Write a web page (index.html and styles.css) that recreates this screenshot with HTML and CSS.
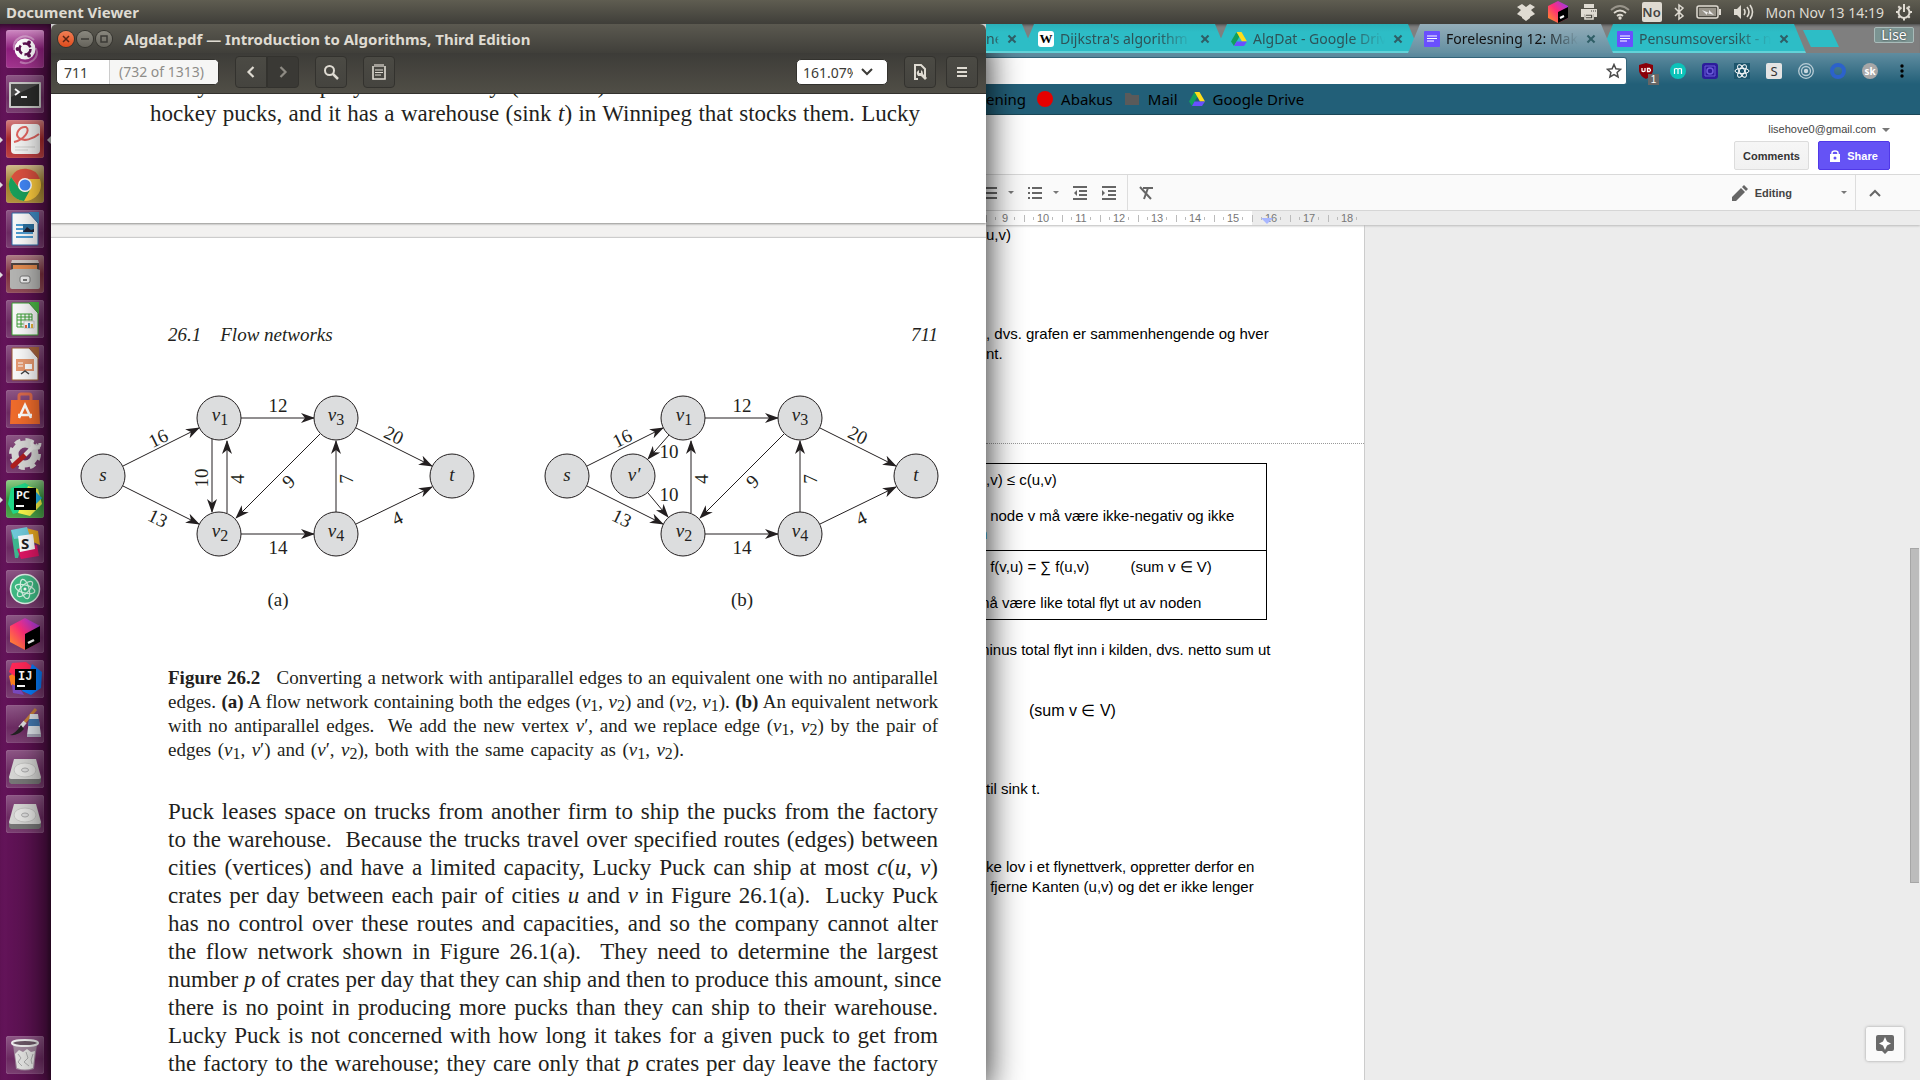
FILE: index.html
```html
<!DOCTYPE html>
<html lang="en">
<head>
<meta charset="utf-8">
<title>Document Viewer</title>
<link rel="stylesheet" href="styles.css">
</head>
<body>
<header class="panel">
  <span class="panel-app">Document Viewer</span>
  <div class="indicators">
    <svg class="ind" width="20" height="20" viewBox="0 0 20 20"><path fill="#dfdbd2" d="M6 2l4 3 4-3 5 3-4 3 4 4-5 3 0 1-4 3-4-3 0-1-5-3 4-4-4-3z"/></svg>
    <svg class="ind" width="22" height="22" viewBox="0 0 22 22"><defs><linearGradient id="jb" x1="0" y1="1" x2="1" y2="0"><stop offset="0" stop-color="#ff9a1f"/><stop offset=".5" stop-color="#ff2d78"/><stop offset="1" stop-color="#8a3cff"/></linearGradient></defs><path fill="url(#jb)" d="M11 0l10 5v12l-10 5-10-5V5z"/><path d="M11 11l10-5v11l-10 5z"/><path stroke="#fff" stroke-width="2" d="M13 17l4-2"/></svg>
    <svg class="ind" width="18" height="18" viewBox="0 0 18 18"><path fill="#dfdbd2" d="M4 1h10v4H4zM1 6h16v8h-3v-3H4v3H1z"/><path fill="none" stroke="#dfdbd2" stroke-width="1.6" d="M5 11h8v5H5zM6 13.500h5"/><path stroke="#45433e" d="M11 8h1m1 0h1m1 0h1"/></svg>
    <svg class="ind" width="22" height="18" viewBox="0 0 22 18"><g fill="none" stroke="#dfdbd2" stroke-width="1.800"><path stroke="#99958b" d="M2 7q9-8 18 0"/><path d="M5 10q6-5 12 0M8 13q3-2.500 6 0"/></g><circle cx="11" cy="15" r="1.700" fill="#dfdbd2"/></svg>
    <span class="lang">No</span>
    <svg class="ind" width="12" height="18" viewBox="0 0 12 18"><path fill="none" stroke="#dfdbd2" stroke-width="1.500" d="M2 5l8 8-4 3V2l4 3-8 8"/></svg>
    <svg class="ind" width="26" height="16" viewBox="0 0 26 16"><rect x="1" y="2" width="21" height="12" rx="2" fill="none" stroke="#dfdbd2" stroke-width="1.500"/><path fill="#dfdbd2" d="M23 5h2v6h-2z"/><path fill="#98948a" d="M3 4h17v8H3z"/><path fill="#eee" d="M6 6l7 3 0-3 5 5-7-2v2z"/></svg>
    <svg class="ind" width="22" height="18" viewBox="0 0 22 18"><path fill="#dfdbd2" d="M1 6h3l4-4v14l-4-4H1z"/><g fill="none" stroke="#dfdbd2" stroke-width="1.600"><path d="M11 6q2 3 0 6M14 4q4 5 0 10M17 2q5 7 0 14"/></g></svg>
    <time class="clock">Mon Nov 13 14:19</time>
    <svg class="ind" width="18" height="18" viewBox="0 0 18 18"><g fill="none" stroke="#dfdbd2"><path stroke-width="2" d="M6.500 4.500a5.500 5.500 0 1 0 5 0M9 1v8"/><path stroke-width="2" d="M1 9h2M15 9h2M3.300 14.700l1.500-1.500M14.700 14.700l-1.500-1.500M9 15v2.500M3.300 3.300l1.500 1.500M14.700 3.300l-1.500 1.500"/></g></svg>
  </div>
</header>

<div class="desktop">
  <nav class="launcher" aria-label="Launcher">
    <button class="tile tile-dash" aria-label="Dash"><svg viewBox="0 0 38 38"><g fill="none" stroke="#fff" stroke-opacity=".35" stroke-width="2"><path d="M8 20C6 8 20 2 28 10M30 18c4 10-6 18-16 14"/></g><circle cx="19" cy="19" r="10.500" fill="#fff"/><circle cx="19" cy="19" r="5.500" fill="none" stroke="#5c1150" stroke-width="2.500" stroke-dasharray="9 2.500"/><g fill="#5c1150"><circle cx="11.500" cy="19" r="1.900"/><circle cx="23" cy="12.500" r="1.900"/><circle cx="23" cy="25.500" r="1.900"/></g></svg></button>
    <button class="tile" aria-label="Terminal"><svg viewBox="0 0 38 38"><rect x="3" y="7" width="32" height="26" rx="1" fill="#c8c8c6"/><rect x="5" y="9" width="28" height="22" fill="#2b2c2b"/><path fill="#4b4b4a" d="M5 9h28L5 22z"/><path fill="none" stroke="#fff" stroke-width="1.800" d="M9 14l4 3-4 3M15 22h6"/></svg></button>
    <button class="tile tile-red running focused" aria-label="Document Viewer"><svg viewBox="0 0 38 38"><rect x="5" y="4" width="29" height="30" rx="4" fill="#f3f3f2"/><path fill="none" stroke="#e0645f" stroke-width="2" d="M8 22c10-2 17-12 12-15-6-1-12 7-7 11s14 1 20-4"/><path stroke="#cfcfcd" d="M9 27h20M9 30h13"/></svg></button>
    <button class="tile tile-gold running" aria-label="Chrome"><svg viewBox="0 0 38 38"><circle cx="19" cy="20" r="16" fill="#fbca3e"/><path fill="#d9503f" d="M5 12a16 16 0 0 1 29 2H19a7 7 0 0 0-6 9z"/><path fill="#1a9f5b" d="M5 12a16 16 0 0 0 13 24l6-11a7 7 0 0 1-11-2z"/><circle cx="19" cy="20" r="7" fill="#fff"/><circle cx="19" cy="20" r="5.500" fill="#4285f4"/></svg></button>
    <button class="tile" aria-label="Writer"><svg viewBox="0 0 38 38"><path fill="#fafafa" stroke="#2d6ca8" d="M6 3h17l9 10v22H6z"/><path fill="#3f8cc4" d="M23 2h10v12z"/><path stroke="#4d9bd0" stroke-width="2" d="M10 15h9M10 19h7M10 23h17M10 27h17"/><path fill="#2a6f9e" d="M17 14h11v8H17z"/><path fill="#223" d="M17 22l4-5 4 3 3-1v3z"/></svg></button>
    <button class="tile tile-brown running" aria-label="Files"><svg viewBox="0 0 38 38"><path fill="#cfc6c3" d="M6 5h26l1 3H5z"/><path fill="#4f4340" d="M5 8h28v8H5z"/><path fill="#e28b4f" d="M7 10h24v6H7z"/><path fill="#b4b4b2" d="M4 15l3-1h24l3 1v17q0 2-2 2H6q-2 0-2-2z"/><rect x="14" y="21" width="10" height="7" rx="2" fill="#eee" stroke="#777"/><path stroke="#777" stroke-width="2" d="M17 25h4"/></svg></button>
    <button class="tile" aria-label="Calc"><svg viewBox="0 0 38 38"><path fill="#fafafa" stroke="#3aa332" d="M6 3h17l9 10v22H6z"/><path fill="#4cb944" d="M23 2h10v12z"/><path fill="none" stroke="#3c9e36" d="M11 14h15v13H11zM11 17h15M11 20h15M11 24h15M15 14v13M19 14v13M23 14v13"/><path fill="#fff" stroke="#ccc" d="M18 21h10v7H18z"/><path stroke-width="2" stroke="#e0673a" d="M20 28v-3"/><path stroke-width="2" stroke="#3f8cc4" d="M23 28v-5"/><path stroke-width="2" stroke="#e6b63b" d="M26 28v-4"/></svg></button>
    <button class="tile" aria-label="Impress"><svg viewBox="0 0 38 38"><path fill="#fafafa" stroke="#9c5a33" d="M6 3h17l9 10v22H6z"/><path fill="#a8653b" d="M23 2h10v12z"/><path fill="#e79a70" d="M10 14h18v12H10z"/><path stroke="#fff" d="M12 18h5M12 21h5"/><path fill="#fff" d="M19 19h7v5h-7z"/><path fill="none" stroke="#444" stroke-width="1.500" d="M15 29l4-3 4 3"/></svg></button>
    <button class="tile" aria-label="Software"><svg viewBox="0 0 38 38"><path fill="none" stroke="#d9694a" stroke-width="3" d="M13 11V6q0-2 2-2h8q2 0 2 2v5"/><path fill="#f06c2c" d="M5 10h28l1 24H4z"/><path fill="none" stroke="#fff" stroke-width="2.500" d="M13 28l6-13 6 13M12 25h14"/></svg></button>
    <button class="tile" aria-label="Settings"><svg viewBox="0 0 38 38"><circle cx="19" cy="19" r="10" fill="none" stroke="#d8d8d6" stroke-width="7"/><circle cx="19" cy="19" r="14" fill="none" stroke="#d8d8d6" stroke-width="4" stroke-dasharray="6 5"/><path stroke="#b01f1f" stroke-width="5" stroke-linecap="round" d="M7 31l12-11"/><path stroke="#e8e8e6" stroke-width="4" d="M19 20l10-10"/><path fill="none" stroke="#e8e8e6" stroke-width="3" d="M27 5q-3 6 2 8 5 0 5-5"/></svg></button>
    <button class="tile tile-green running" aria-label="PyCharm"><svg viewBox="0 0 38 38"><path fill="#21d789" d="M5 8l14-5 10 6-5 20-17 5-5-10z"/><path fill="#fcf84a" d="M22 6l10 3 4 15-12 12-12-3z"/><path fill="#22b8ef" d="M29 11l7 7-6 6z"/><rect x="8" y="8" width="22" height="22" /><text x="10" y="19" class="ide">PC</text><path stroke="#fff" stroke-width="2" d="M10 26h8"/></svg></button>
    <button class="tile" aria-label="Slack"><svg viewBox="0 0 38 38"><path fill="#3eb991" d="M5 5h9l4 8-6 20H9z"/><path fill="#e9a820" d="M20 3l12 3 2 14-14-6z"/><path fill="#70cadb" d="M5 5l16-3 3 10-16 2z"/><path fill="#e01765" d="M15 34l18-3-2-11-20 4z"/><path fill="#fff" d="M12 11l15-2 2 15-15 3z"/><text x="15" y="24" class="ide ide-dark">S</text></svg></button>
    <button class="tile" aria-label="Atom"><svg viewBox="0 0 38 38"><circle cx="19" cy="19" r="14.500" fill="#3fba84" stroke="#e2efe8" stroke-width="1.500"/><g fill="none" stroke="#d9f5e6" stroke-width="1.200"><ellipse cx="19" cy="19" rx="10" ry="4" transform="rotate(15 19 19)"/><ellipse cx="19" cy="19" rx="10" ry="4" transform="rotate(75 19 19)"/><ellipse cx="19" cy="19" rx="10" ry="4" transform="rotate(135 19 19)"/></g><circle cx="19" cy="19" r="1.500" fill="#fff"/></svg></button>
    <button class="tile" aria-label="Toolbox"><svg viewBox="0 0 38 38"><path fill="url(#jb)" d="M19 3l15 8v16l-15 8-15-8V11z"/><path d="M19 19l15-8v16l-15 8z"/><path stroke="#fff" stroke-width="2.500" d="M22 28l6-3"/></svg></button>
    <button class="tile" aria-label="IDEA"><svg viewBox="0 0 38 38"><path fill="#fc801d" d="M3 16l10-6v18l-8-3z"/><path fill="#fe2857" d="M6 3l14-1 8 6-14 12L3 12z"/><path fill="#087cfa" d="M26 4l10 8-1 16-10 7-9-4 9-24z"/><path fill="#7a4ac0" d="M6 24l8 4 4 7-11-2z"/><rect x="9" y="9" width="21" height="21"/><text x="12" y="20" class="ide ide-mono">IJ</text><path stroke="#fff" stroke-width="2" d="M11 26h8"/></svg></button>
    <button class="tile" aria-label="Paint"><svg viewBox="0 0 38 38"><path stroke="#c8813b" stroke-width="3" d="M30 4L18 18"/><path stroke="#ddd" stroke-width="4" d="M19 17l-5 6"/><path fill="#222" d="M15 20l3 4q-6 7-14 6 6-2 11-10z"/><path fill="#dfe5ea" d="M24 9h8l3 21H21z"/><path fill="#4379b0" d="M23 14h10l1 7H22z"/><path fill="#aab" d="M21 29h14v3H21z"/></svg></button>
    <button class="tile" aria-label="Volume 1"><svg viewBox="0 0 38 38"><path fill="#777" d="M3 27h32v5l-2 2H5l-2-2z"/><path fill="#d6d6d4" d="M8 9h22l5 18q0 2-2 2H5q-2 0-2-2z"/><ellipse cx="19" cy="20" rx="11" ry="7" fill="#e6e6e4" stroke="#c5c5c3"/><ellipse cx="19" cy="20" rx="3.500" ry="2" fill="#ddd" stroke="#aaa"/></svg></button>
    <button class="tile" aria-label="Volume 2"><svg viewBox="0 0 38 38"><path fill="#777" d="M3 27h32v5l-2 2H5l-2-2z"/><path fill="#d6d6d4" d="M8 9h22l5 18q0 2-2 2H5q-2 0-2-2z"/><ellipse cx="19" cy="20" rx="11" ry="7" fill="#e6e6e4" stroke="#c5c5c3"/><ellipse cx="19" cy="20" rx="3.500" ry="2" fill="#ddd" stroke="#aaa"/></svg></button>
    <button class="tile tile-last" aria-label="Trash"><svg viewBox="0 0 38 38"><path fill="#bbb" fill-opacity=".6" d="M7 8h24l-3 25q-9 3-18 0z"/><path fill="#e4e4e2" d="M9 18l4-4 4 2 4-3 4 3 4-1-2 17q-8 3-16 0z"/><path fill="none" stroke="#aaa" d="M12 18l3 4-3 4 4 4M20 16l2 6-4 4 5 4M27 18l-2 6 1 4"/><ellipse cx="19" cy="7" rx="13" ry="3" fill="#6b5766" stroke="#eee" stroke-width="2"/></svg></button>
  </nav>

  <main class="viewer">
    <div class="titlebar">
      <button class="wm wm-close" aria-label="Close"><svg width="8" height="8" viewBox="0 0 8 8"><path stroke="#5a2413" stroke-width="1.500" d="M1 1l6 6M7 1L1 7"/></svg></button>
      <button class="wm" aria-label="Minimize"><svg width="8" height="8" viewBox="0 0 8 8"><path stroke="#3b3a36" stroke-width="1.500" d="M0 4h8"/></svg></button>
      <button class="wm" aria-label="Maximize"><svg width="8" height="8" viewBox="0 0 8 8"><path fill="none" stroke="#3b3a36" stroke-width="1.500" d="M1 1h6v6H1z"/></svg></button>
      <h1 class="title">Algdat.pdf — Introduction to Algorithms, Third Edition</h1>
    </div>
    <div class="toolbar">
      <div class="pager">
        <input id="page" class="page-no" value="711" aria-label="Page">
        <label for="page" class="page-of">(732 of 1313)</label>
      </div>
      <div class="pair">
        <button class="tb" aria-label="Previous page"><svg width="16" height="16" viewBox="0 0 16 16"><path fill="none" stroke="#dfdbd2" stroke-width="2.200" d="M10.500 3L5.500 8l5 5"/></svg></button><button class="tb tb-off" aria-label="Next page"><svg width="16" height="16" viewBox="0 0 16 16"><path fill="none" stroke="#8e8b84" stroke-width="2.200" d="M5.500 3l5 5-5 5"/></svg></button>
      </div>
      <button class="tb" aria-label="Find"><svg width="16" height="16" viewBox="0 0 16 16"><circle cx="6.500" cy="6.500" r="4.500" fill="none" stroke="#dfdbd2" stroke-width="2"/><path stroke="#dfdbd2" stroke-width="2.500" d="M10 10l5 5"/></svg></button>
      <button class="tb" aria-label="Annotate"><svg width="16" height="18" viewBox="0 0 16 18"><path fill="none" stroke="#dfdbd2" stroke-width="1.600" d="M2 3v13h12V3"/><path stroke="#dfdbd2" stroke-width="1.200" d="M4 1v3M6 1v3M8 1v3M10 1v3M12 1v3M4 7h8M4 9.500h8M4 12h6"/></svg></button>
      <div class="zoom">
        <input class="zoom-level" value="161.07%" aria-label="Zoom">
        <button class="zoom-open" aria-label="Zoom levels"><svg width="14" height="10" viewBox="0 0 14 10"><path fill="none" stroke="#3c3b37" stroke-width="2" d="M2 2l5 5 5-5"/></svg></button>
      </div>
      <button class="tb" aria-label="File options"><svg width="16" height="18" viewBox="0 0 16 18"><path fill="none" stroke="#dfdbd2" stroke-width="2" d="M6 16H3V2h6l4 4v8"/><path fill="#dfdbd2" d="M7 7q-4 2-1 6l3 0 4 4 2-2-4-4q0-3-2-4v3H7z"/></svg></button>
      <button class="tb" aria-label="Menu"><svg width="12" height="12" viewBox="0 0 12 12"><path stroke="#dfdbd2" stroke-width="2" d="M1 2h10M1 6h10M1 10h10"/></svg></button>
    </div>

    <div class="pages">
      <section class="sheet sheet-prev">
        <p class="body"><span class="ln">Lucky Puck Company has a factory (source <i>s</i>) in Vancouver that manufactures</span>
        <span class="ln">hockey pucks, and it has a warehouse (sink <i>t</i>) in Winnipeg that stocks them. Lucky</span></p>
      </section>
      <section class="sheet sheet-cur">
        <div class="runhead"><span>26.1 &nbsp;&nbsp; Flow networks</span><span>711</span></div>
        <svg class="figure" viewBox="51 380 935 240" role="img" aria-label="Flow networks (a) and (b)">
          <defs>
            <marker id="arrow" viewBox="0 0 14 10" refX="13" refY="5" markerWidth="14" markerHeight="10" markerUnits="userSpaceOnUse" orient="auto"><path fill="#231f20" d="M0 0l14 5-14 5 4-5z"/></marker>
            <g id="net">
              <g class="edges">
                <path d="M123 466l76-38"/><path d="M123 486l76 38"/><path d="M241 418h73"/><path d="M241 534h73"/>
                <path d="M227 513v-72"/><path d="M320 434l-84 84"/><path d="M336 512v-71"/><path d="M356 428l76 38"/><path d="M356 524l76-37"/>
              </g>
              <g class="nodes"><circle cx="103" cy="476" r="22"/><circle cx="219" cy="418" r="22"/><circle cx="336" cy="418" r="22"/><circle cx="219" cy="534" r="22"/><circle cx="336" cy="534" r="22"/><circle cx="452" cy="476" r="22"/></g>
              <g class="names">
                <text x="103" y="481">s</text><text x="452" y="481">t</text>
                <text x="220" y="421">v<tspan class="sub" dy="4">1</tspan></text><text x="336" y="421">v<tspan class="sub" dy="4">3</tspan></text>
                <text x="220" y="537">v<tspan class="sub" dy="4">2</tspan></text><text x="336" y="537">v<tspan class="sub" dy="4">4</tspan></text>
              </g>
              <g class="caps">
                <text transform="translate(161 444) rotate(-26)">16</text><text transform="translate(155 524) rotate(26)">13</text>
                <text x="278" y="412">12</text><text x="278" y="554">14</text>
                <text transform="translate(244 479) rotate(-90)">4</text><text transform="translate(293 486) rotate(-45)">9</text>
                <text transform="translate(353 479) rotate(-90)">7</text><text transform="translate(391 441) rotate(26)">20</text>
                <text transform="translate(400 524) rotate(-26)">4</text>
              </g>
            </g>
          </defs>
          <use href="#net"/><use href="#net" transform="translate(464)"/>
          <g class="edges"><path d="M212 439v73"/><path d="M669 435l-21 24"/><path d="M648 493l20 24"/></g>
          <g class="nodes"><circle cx="633" cy="476" r="22"/></g>
          <g class="names"><text x="634" y="481">v′</text></g>
          <g class="caps"><text transform="translate(208 478) rotate(-90)">10</text><text x="669" y="458">10</text><text x="669" y="501">10</text><text x="278" y="606">(a)</text><text x="742" y="606">(b)</text></g>
        </svg>
        <p class="caption"><span class="ln"><b>Figure 26.2</b> &nbsp;&nbsp;Converting a network with antiparallel edges to an equivalent one with no antiparallel</span>
        <span class="ln">edges. <b>(a)</b> A flow network containing both the edges (<i>ν</i><sub>1</sub>, <i>ν</i><sub>2</sub>) and (<i>ν</i><sub>2</sub>, <i>ν</i><sub>1</sub>). <b>(b)</b> An equivalent network</span>
        <span class="ln">with no antiparallel edges. &nbsp;We add the new vertex <i>ν</i>′, and we replace edge (<i>ν</i><sub>1</sub>, <i>ν</i><sub>2</sub>) by the pair of</span>
        <span class="ln ln-end">edges (<i>ν</i><sub>1</sub>, <i>ν</i>′) and (<i>ν</i>′, <i>ν</i><sub>2</sub>), both with the same capacity as (<i>ν</i><sub>1</sub>, <i>ν</i><sub>2</sub>).</span></p>
        <p class="body"><span class="ln">Puck leases space on trucks from another firm to ship the pucks from the factory</span>
        <span class="ln">to the warehouse. &nbsp;Because the trucks travel over specified routes (edges) between</span>
        <span class="ln">cities (vertices) and have a limited capacity, Lucky Puck can ship at most <i>c</i>(<i>u</i>,&nbsp;<i>ν</i>)</span>
        <span class="ln">crates per day between each pair of cities <i>u</i> and <i>ν</i> in Figure 26.1(a). &nbsp;Lucky Puck</span>
        <span class="ln">has no control over these routes and capacities, and so the company cannot alter</span>
        <span class="ln">the flow network shown in Figure 26.1(a). &nbsp;They need to determine the largest</span>
        <span class="ln">number <i>p</i> of crates per day that they can ship and then to produce this amount, since</span>
        <span class="ln">there is no point in producing more pucks than they can ship to their warehouse.</span>
        <span class="ln">Lucky Puck is not concerned with how long it takes for a given puck to get from</span>
        <span class="ln">the factory to the warehouse; they care only that <i>p</i> crates per day leave the factory</span></p>
      </section>
    </div>
  </main>

  <section class="browser">
    <div class="tabs">
      <div class="tab tab-cut"><span class="tab-title">ne</span><button class="x" aria-label="Close tab"></button></div>
      <div class="tab"><span class="fav fav-w">W</span><a class="tab-title" href="#w">Dijkstra's algorithm</a><button class="x" aria-label="Close tab"></button></div>
      <div class="tab"><svg class="fav" viewBox="0 0 16 16"><path fill="#11a05c" d="M5.500 1L0 10.500 3 15l5.500-9.500z"/><path fill="#ffdd1a" d="M5.500 1h5L16 10.500h-5z"/><path fill="#6a4fff" d="M5.500 10.500H16L13 15H3z"/></svg><a class="tab-title" href="#d">AlgDat - Google Drive</a><button class="x" aria-label="Close tab"></button></div>
      <div class="tab tab-active"><svg class="fav" viewBox="0 0 16 16"><rect width="16" height="16" rx="1" fill="#6a4fff"/><path stroke="#fff" stroke-width="1.200" d="M3 5h10M3 7.500h10M3 10h7"/></svg><a class="tab-title" href="#f">Forelesning 12: Maks</a><button class="x" aria-label="Close tab"></button></div>
      <div class="tab tab-end"><svg class="fav" viewBox="0 0 16 16"><rect width="16" height="16" rx="1" fill="#6a4fff"/><path stroke="#fff" stroke-width="1.200" d="M3 5h10M3 7.500h10M3 10h7"/></svg><a class="tab-title" href="#p">Pensumsoversikt - no</a><button class="x" aria-label="Close tab"></button></div>
      <button class="tab-new" aria-label="New tab"></button>
      <button class="profile">Lise</button>
    </div>
    <div class="navbar">
      <div class="omnibox"><svg width="16" height="16" viewBox="0 0 16 16"><path fill="none" stroke="#4a4a4a" stroke-width="1.500" d="M8 1.500l1.900 4.300 4.700.5-3.500 3.100 1 4.600L8 11.600 3.900 14l1-4.600L1.400 6.300l4.700-.5z"/></svg></div>
      <div class="exts">
        <button class="ext" aria-label="uBlock"><svg viewBox="0 0 16 16"><path fill="#8b0008" d="M8 0l7 2v6q-1 5-7 8-6-3-7-8V2z"/><path fill="none" stroke="#fff" stroke-width="1.300" d="M4 5v3q1 1 3 0V5M9.500 5.500h2q2 2 0 3h-2z"/></svg><span class="count">1</span></button>
        <button class="ext" aria-label="Momentum"><svg viewBox="0 0 16 16"><circle cx="8" cy="8" r="8" fill="#0cc3b9"/><path fill="none" stroke="#fff" stroke-width="1.200" d="M4.500 11V6q2-1 3.500 0v5M8 6q2-1 3.500 0v5"/></svg></button>
        <button class="ext" aria-label="Capture"><svg viewBox="0 0 16 16"><rect width="16" height="16" rx="3" fill="#2c1c9b"/><path fill="none" stroke="#6b5cd8" d="M3 3h10v10H3z"/><circle cx="8" cy="8" r="3" fill="#2c1c9b" stroke="#6b5cd8" stroke-width="1.500"/></svg></button>
        <button class="ext" aria-label="React"><svg viewBox="0 0 16 16"><path fill="#1d566d" d="M0 0h16v16H0z"/><g fill="none" stroke="#fff"><ellipse cx="8" cy="8" rx="7" ry="2.700"/><ellipse cx="8" cy="8" rx="7" ry="2.700" transform="rotate(60 8 8)"/><ellipse cx="8" cy="8" rx="7" ry="2.700" transform="rotate(120 8 8)"/></g></svg></button>
        <button class="ext ext-s">S</button>
        <button class="ext" aria-label="Signal"><svg viewBox="0 0 16 16"><g fill="none" stroke="#b8ccd5" stroke-width="1.300"><circle cx="8" cy="8" r="7.300"/><circle cx="8" cy="8" r="4.500"/></g><circle cx="8" cy="8" r="2.200" fill="#c9d8df"/></svg></button>
        <button class="ext" aria-label="Ring"><svg viewBox="0 0 16 16"><circle cx="8" cy="8" r="6" fill="none" stroke="#2c62cb" stroke-width="4"/></svg></button>
        <button class="ext ext-sk">sk</button>
        <button class="ext" aria-label="Menu"><svg viewBox="0 0 16 16"><circle cx="8" cy="3" r="1.700"/><circle cx="8" cy="8" r="1.700"/><circle cx="8" cy="13" r="1.700"/></svg></button>
      </div>
    </div>
    <nav class="bookmarks">
      <a href="#e">ening</a>
      <a href="#a"><span class="dot"></span>Abakus</a>
      <a href="#m"><svg width="16" height="16" viewBox="0 0 16 16"><path fill="#5a5a5a" d="M1 2h5l2 2h7v10H1z"/></svg>Mail</a>
      <a href="#g"><svg width="16" height="16" viewBox="0 0 16 16"><path fill="#11a05c" d="M5.500 1L0 10.500 3 15l5.500-9.500z"/><path fill="#ffdd1a" d="M5.500 1h5L16 10.500h-5z"/><path fill="#6a4fff" d="M5.500 10.500H16L13 15H3z"/></svg>Google Drive</a>
    </nav>
    <div class="docs-head">
      <a class="account" href="#acc">lisehove0@gmail.com<i class="caret caret-big"></i></a>
      <div class="docs-actions">
        <button class="btn">Comments</button>
        <button class="btn btn-share"><svg width="10" height="12" viewBox="0 0 10 12"><path fill="#fff" fill-rule="evenodd" d="M0 4h10v8H0zM5 6.500a1.500 1.500 0 1 0 0 3 1.500 1.500 0 0 0 0-3z"/><path fill="none" stroke="#fff" stroke-width="1.500" d="M2 5V3q0-2 3-2t3 2v2"/></svg>Share</button>
      </div>
    </div>
    <div class="docs-tools">
      <button class="tool tool-cut" aria-label="Numbered list"><svg width="11" height="14" viewBox="0 0 11 14"><path stroke="#666" stroke-width="2" d="M0 2h11M0 7h11M0 12h11"/></svg></button>
      <i class="caret"></i>
      <button class="tool" aria-label="Bulleted list"><svg width="14" height="14" viewBox="0 0 14 14"><path stroke="#666" stroke-width="2" d="M4 2h10M4 7h10M4 12h10"/><path fill="#666" d="M0 1h2v2H0zM0 6h2v2H0zM0 11h2v2H0z"/></svg></button>
      <i class="caret"></i>
      <button class="tool" aria-label="Decrease indent"><svg width="14" height="14" viewBox="0 0 14 14"><path stroke="#666" stroke-width="2" d="M0 1h14M6 5h8M6 9h8M0 13h14"/><path fill="#666" d="M4 4v6L1 7z"/></svg></button>
      <button class="tool" aria-label="Increase indent"><svg width="14" height="14" viewBox="0 0 14 14"><path stroke="#666" stroke-width="2" d="M0 1h14M6 5h8M6 9h8M0 13h14"/><path fill="#666" d="M0 4v6l3-3z"/></svg></button>
      <i class="rule"></i>
      <button class="tool" aria-label="Clear formatting"><svg width="14" height="14" viewBox="0 0 14 14"><path fill="none" stroke="#666" stroke-width="2" d="M4 2h10M9 2L5 13M1 1l11 12"/></svg></button>
      <button class="mode"><svg width="16" height="16" viewBox="0 0 16 16"><path fill="#666" d="M0 16v-4l9-9 4 4-9 9zM10 2l2-2 4 4-2 2z"/></svg><span>Editing</span><i class="caret"></i></button>
      <i class="rule"></i>
      <button class="tool tool-up" aria-label="Hide menus"><svg width="12" height="8" viewBox="0 0 12 8"><path fill="none" stroke="#666" stroke-width="2" d="M1 7l5-5 5 5"/></svg></button>
    </div>
    <div class="ruler">
      <ol class="cms"><li>9</li><li>10</li><li>11</li><li>12</li><li>13</li><li>14</li><li>15</li><li class="out margin-at">16</li><li class="out">17</li><li class="out">18</li></ol>
    </div>
    <div class="docs-body">
      <article class="paper">
        <div class="part part-1">
          <p>u,v)</p>
          <p>, dvs. grafen er sammenhengende og hver<br>nt.</p>
        </div>
        <div class="part">
          <table class="rules">
            <tr><td>,v) ≤ c(u,v)<br><br>&nbsp;node v må være ikke-negativ og ikke<br><a class="cut-n" href="#n">n</a></td></tr>
            <tr><td>&nbsp;f(v,u) = ∑ f(u,v) <span class="tabbed">(sum v ∈ V)</span><br><br><span class="cut-m">må være like total flyt ut av noden</span></td></tr>
          </table>
          <p><span class="cut-m">minus total flyt inn i kilden, dvs. netto sum ut</span></p>
          <p class="formula">(sum v ∈ V)</p>
          <p>til sink t.</p>
          <p>ke lov i et flynettverk, oppretter derfor en<br>&nbsp;fjerne Kanten (u,v) og det er ikke lenger</p>
        </div>
      </article>
      <div class="thumb"></div>
      <button class="explore" aria-label="Explore"><svg width="18" height="19" viewBox="0 0 18 19"><path fill="#6a6a6a" d="M2 0h14q2 0 2 2v12q0 2-2 2h-4l-3 3-3-3H2q-2 0-2-2V2q0-2 2-2z"/><path fill="#fff" d="M9 2l2 4.500L15 8.500l-4 2L9 15l-2-4.500-4-2 4-2z"/></svg></button>
    </div>
  </section>
</div>
</body>
</html>
```
FILE: styles.css
```css
* { box-sizing: border-box; }
html, body { height: 100%; margin: 0; }
body { display: flex; flex-direction: column; overflow: hidden; font-family: "Noto Sans", "Open Sans", sans-serif; font-size: 14px; background: #ececec; }
button { border: 0; padding: 0; margin: 0; background: none; font: inherit; color: inherit; display: flex; align-items: center; justify-content: center; }
a { color: inherit; text-decoration: none; }
input { border: 0; padding: 0; margin: 0; background: none; font: inherit; color: inherit; }
p, h1, ol { margin: 0; padding: 0; }
svg { display: block; flex: none; }

/* top panel */
.panel { flex: none; height: 24px; display: flex; justify-content: space-between; align-items: center; padding: 0 7px 0 6px; background: linear-gradient(#5f5d51, #3f3e39); color: #dfdbd2; position: relative; z-index: 3; }
.panel-app { font-weight: 700; font-size: 15px; }
.indicators { display: flex; align-items: center; gap: 11px; }
.clock { font-size: 14px; }
.lang { width: 20px; height: 20px; border-radius: 2px; background: #dfdbd2; color: #45433e; font-size: 13px; font-weight: 600; line-height: 20px; text-align: center; }

.desktop { flex: 1; min-height: 0; display: flex; }

/* launcher */
.launcher { flex: none; width: 51px; padding: 6px 7px 6px 6px; display: flex; flex-direction: column; gap: 7px; background: linear-gradient(90deg, #64145a, #56104b 90%, #45103c); box-shadow: inset 0 6px 6px -4px #2a0824; }
.tile { position: relative; flex: none; width: 38px; height: 38px; border-radius: 3px; background: linear-gradient(#8f5887, #6c2b62 60%, #7c4173); box-shadow: inset 0 0 1px #d6b8d2; }
.tile svg { width: 38px; height: 38px; }
.tile-dash { background: linear-gradient(#d08bc4, #8e1f7d 50%, #a3368f); }
.tile-red { background: linear-gradient(#d58080, #a8282c 50%, #c04445); }
.tile-gold { background: linear-gradient(#d3bd8c, #a07f2c 50%, #b5953f); }
.tile-brown { background: linear-gradient(#b08088, #7f3040 50%, #93505a); }
.tile-green { background: linear-gradient(#8fd087, #35913a 50%, #4faa4c); }
.tile-last { margin-top: auto; }
.running::before { content: ""; position: absolute; left: -6px; top: 17px; border: 3px solid transparent; border-left-color: #ddd; border-right: 0; }
.focused::after { content: ""; position: absolute; right: -7px; top: 16px; border: 4px solid transparent; border-right-color: #ddd; border-left: 0; }
.ide { font: 700 11px "Noto Sans", sans-serif; fill: #fff; }
.ide-dark { font-size: 15px; fill: #222; }
.ide-mono { font-family: "Liberation Mono", monospace; font-size: 12px; }

/* document viewer window */
.viewer { flex: none; width: calc(50vw - 25px); display: flex; flex-direction: column; position: relative; z-index: 2; box-shadow: 0 12px 36px rgba(0, 0, 0, .9); border-radius: 6px 6px 0 0; background: #f2f1f0; }
.titlebar { flex: none; height: 29px; display: flex; align-items: center; gap: 3px; padding-left: 7px; background: linear-gradient(#5b5950, #403f3a); border-radius: 6px 6px 0 0; color: #dfdbd2; }
.wm { width: 16px; height: 16px; border-radius: 8px; background: linear-gradient(#8a887f, #65635b); box-shadow: 0 0 0 1px #35342f; }
.wm-close { background: linear-gradient(#f27f55, #df4b1c); }
.title { margin-left: 9px; font-size: 15px; font-weight: 700; line-height: 20px; }
.toolbar { flex: none; height: 41px; display: flex; align-items: center; gap: 16px; padding: 2px 8px 4px 5px; background: linear-gradient(#3d3c38, #504e46); border-bottom: 1px solid #33322e; }
.pager { width: 163px; height: 26px; display: flex; align-items: center; background: #fff; border: 1px solid #33322e; border-radius: 5px; overflow: hidden; color: #3c3b37; }
.page-no { width: 53px; padding-left: 7px; height: 100%; border-right: 1px solid #ccc; }
.page-of { flex: 1; height: 100%; padding-left: 9px; line-height: 24px; background: #f6f6f5; color: #8e8d89; }
.pair { display: flex; border-radius: 4px; }
.pair .tb:first-child { border-radius: 4px 0 0 4px; }
.pair .tb:last-child { border-radius: 0 4px 4px 0; }
.tb { width: 32px; height: 32px; border: 1px solid #33322e; border-radius: 4px; background: linear-gradient(#4b4a44, #45443f); }
.tb-off { background: #3a3935; }
.zoom { margin-left: auto; width: 92px; height: 26px; display: flex; align-items: center; padding-left: 6px; background: #fff; border: 1px solid #33322e; border-radius: 5px; color: #3c3b37; }
.zoom-level { width: 50px; }
.zoom-open { width: 28px; height: 24px; }
.zoom + .tb { margin-right: -6px; }

.pages { flex: 1; min-height: 0; overflow: hidden; display: flex; flex-direction: column; gap: 15px; color: #231f20; font-family: "Liberation Serif", "Times New Roman", serif; }
.sheet { background: #fff; }
.sheet-prev { flex: none; height: 129px; overflow: hidden; display: flex; flex-direction: column; justify-content: flex-end; padding: 0 66px 95px 99px; box-shadow: 0 1px 2px #8f8e8d; }
.sheet-cur { flex: none; padding: 85px 0 40px; box-shadow: 0 -1px 1px #ccc; }
.body { font-size: 23px; line-height: 28px; }
.ln { display: block; white-space: nowrap; text-align: justify; text-align-last: justify; }
.ln-end { width: 67%; }
.sheet-cur .body { padding: 36px 48px 0 117px; }
.runhead { display: flex; justify-content: space-between; padding: 0 48px 0 117px; font-size: 19px; line-height: 24px; font-style: italic; }
.figure { width: 100%; margin: 33px 0 46px; }
.caption { padding: 0 48px 0 117px; font-size: 19px; line-height: 24px; }
.caption sub { font-size: 16px; line-height: 0; vertical-align: -3px; }
.edges path { fill: none; stroke: #231f20; stroke-width: 1; marker-end: url(#arrow); }
.nodes circle { fill: #dcddde; stroke: #231f20; stroke-width: 1; }
.names text { font-size: 19px; font-style: italic; text-anchor: middle; fill: #231f20; }
.names .sub { font-size: 16px; font-style: normal; }
.caps text { font-size: 19px; text-anchor: middle; fill: #231f20; }

/* browser window */
.browser { flex: 1; min-width: 0; display: flex; flex-direction: column; overflow: hidden; background: #fff; }
.tabs { flex: none; height: 29px; display: flex; background: #7f7f7f; box-shadow: inset 0 3px 3px -2px #444; }
.tab { position: relative; z-index: 0; flex: none; width: 205px; height: 29px; display: flex; align-items: center; gap: 6px; margin-left: -12px; padding: 0 18px 0 16px; background: linear-gradient(#2ab0b9, #2dbdc6 8px, #2dbdc6 27px, #62d2d8 27px); clip-path: polygon(0 100%, 12px 0, calc(100% - 12px) 0, 100% 100%); color: #2e5358; font-size: 14px; }
.tab-cut { width: 48px; margin-left: 0; padding: 0 18px 0 0; clip-path: polygon(0 100%, 0 0, calc(100% - 12px) 0, 100% 100%); }
.tab-cut, .tab:nth-child(2) { z-index: 1; }
.tab-cut { z-index: 2; }
.tab-active { z-index: 2; background: linear-gradient(#94adb9, #638fa1); color: #111; }
.tab-title { flex: 1; min-width: 0; overflow: hidden; white-space: nowrap; -webkit-mask-image: linear-gradient(90deg, #000 75%, transparent); mask-image: linear-gradient(90deg, #000 75%, transparent); }
.fav { flex: none; width: 16px; height: 16px; }
.fav-w { background: #fff; border-radius: 3px; color: #000; font: 700 13px/16px "Liberation Serif", serif; text-align: center; }
.x { position: relative; width: 8px; height: 8px; flex: none; margin-left: 3px; }
.x::before, .x::after { content: ""; position: absolute; left: -1px; top: 3px; width: 10px; height: 2px; background: #2f5e66; transform: rotate(45deg); }
.x::after { transform: rotate(-45deg); }
.tab-new { align-self: center; width: 36px; height: 17px; background: #2dbdc6; clip-path: polygon(0 0, 78% 0, 100% 100%, 22% 100%); margin-left: -3px; }
.profile { margin: 3px 6px 0 auto; width: 40px; height: 16px; background: #7b9492; border: 1px solid #a9bbb9; border-radius: 2px; color: #fff; font-size: 14px; line-height: 14px; text-shadow: 0 0 2px #222; }
.navbar { flex: none; height: 31px; display: flex; align-items: center; background: linear-gradient(#608da0, #225f78); }
.omnibox { flex: 1; height: 28px; margin-top: 4px; display: flex; align-items: center; justify-content: flex-end; padding-right: 4px; background: #fff; border: 1px solid #33647a; border-left: 0; border-radius: 0 3px 3px 0; }
.exts { display: flex; gap: 16px; padding: 4px 10px 0 11px; }
.ext { position: relative; width: 16px; height: 16px; }
.ext svg { width: 16px; height: 16px; }
.ext-s { background: #e4e4e4; border-radius: 2px; color: #333; font-size: 13px; }
.ext-sk { background: #a7a7a7; border-radius: 8px; color: #fff; font-size: 10px; font-weight: 700; }
.count { position: absolute; left: 10px; top: 11px; width: 11px; height: 11px; background: #666; color: #fff; font: 10px/11px "Liberation Sans", sans-serif; text-align: center; }
.bookmarks { flex: none; height: 31px; display: flex; align-items: center; gap: 11px; background: #225f78; border-bottom: 1px solid #1a4757; color: #000; font-size: 15px; }
.bookmarks a { display: flex; align-items: center; gap: 8px; }
.dot { width: 16px; height: 16px; border-radius: 8px; background: #e60000; }
.docs-head { flex: none; display: flex; flex-direction: column; align-items: flex-end; gap: 4px; padding: 7px 30px 4px 0; background: #fff; font-family: "Liberation Sans", Arial, sans-serif; }
.account { display: flex; align-items: center; gap: 6px; font-size: 11px; line-height: 15px; color: #444; }
.caret { border: 3px solid transparent; border-top-color: #777; border-bottom: 0; }
.caret-big { border-width: 4px 4px 0; }
.docs-actions { display: flex; gap: 9px; }
.btn { width: 75px; height: 29px; border: 1px solid #dcdcdc; border-radius: 2px; background: linear-gradient(#f6f6f6, #f1f1f1); color: #333; font-size: 11px; font-weight: 700; }
.btn-share { width: 72px; gap: 7px; background: #6553f5; border-color: #5038e8; color: #fff; }
.docs-tools { flex: none; height: 37px; display: flex; align-items: center; gap: 15px; background: #fafafa; border-top: 1px solid #d9d9d9; border-bottom: 1px solid #d9d9d9; font-family: "Liberation Sans", Arial, sans-serif; }
.tool { width: 14px; height: 14px; }
.tool-cut { width: 11px; }
.docs-tools > .caret { margin-right: -1px; }
.tool + .caret { margin-left: -4px; }
.tool-up { width: 12px; margin: 0 39px 0 -2px; }
.rule { width: 1px; align-self: stretch; background: #ddd; margin: 0 -4px; }
.mode { margin-left: auto; gap: 7px; font-size: 11px; font-weight: 700; color: #444; }
.mode .caret { margin: 0 4px 0 42px; }
.mode + .rule { margin: 0 0 0 -11px; }
.ruler { flex: none; height: 14px; background: #ececec; box-shadow: 0 1px 2px #bbb; position: relative; z-index: 1; font: 11px/14px "Liberation Sans", Arial, sans-serif; color: #777; }
.cms { display: flex; list-style: none; width: max-content; background: #fff; }
.cms li { position: relative; width: 38px; height: 14px; text-align: center; background: linear-gradient(#bbb, #bbb) 0 4px / 1px 7px no-repeat, linear-gradient(#bbb, #bbb) 9px 6px / 1px 3px no-repeat, linear-gradient(#bbb, #bbb) 28px 6px / 1px 3px no-repeat, #fff; }
.cms .out { background-color: #ececec; }
.margin-at::before { content: ""; position: absolute; left: 9px; top: 7px; border: 6px solid transparent; border-top-color: #a9b7ff; border-bottom: 0; }
.docs-body { flex: 1; min-height: 0; position: relative; background: #ececec; overflow: hidden; font: 15px/20px "Liberation Sans", Arial, sans-serif; color: #000; }
.paper { width: 379px; min-height: 100%; background: #fff; border-right: 1px solid #ccc; }
.part { overflow: hidden; padding-top: 19px; }
.part p { margin-bottom: 58px; }
.part-1 { padding-top: 0; height: 219px; border-bottom: 1px dotted #999; }
.part-1 p { margin-bottom: 79px; }
.rules { width: 281px; border-collapse: collapse; margin-bottom: 20px; line-height: 18px; }
.rules td { padding: 7px 0; border: 1px solid #000; border-left: 0; white-space: nowrap; }
.tabbed { margin-left: 37px; }
.cut-m { margin-left: -9px; }
.cut-n { margin-left: -7px; color: #1a7fd4; }
.rules + p { margin-bottom: 41px; }
.part .formula { padding-left: 43px; font-size: 16px; }
.thumb { position: absolute; right: 1px; top: 323px; width: 9px; height: 335px; background: #bcbcbc; border: 1px solid #a6a6a6; border-right: 0; }
.explore { position: absolute; right: 16px; bottom: 19px; width: 38px; height: 34px; background: #fafafa; border-radius: 2px; box-shadow: 0 0 3px #999; }
```
